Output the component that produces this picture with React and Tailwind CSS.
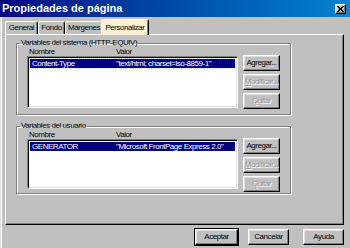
import React from 'react';

const raised = 'border border-t-white border-l-white border-r-black border-b-black shadow-[inset_-1px_-1px_#808080,inset_1px_1px_#dfdfdf]';
const sunken = 'border border-t-[#808080] border-l-[#808080] border-r-white border-b-white shadow-[inset_1px_1px_#000,inset_-1px_-1px_#dfdfdf]';
const small = 'text-[8px] tracking-[-0.45px] leading-none';

function Button({ children, disabled, className = '' }) {
  return (
    <div className={`${raised} h-[16px] flex items-center justify-center ${small} ${disabled ? 'text-[#9a9a9a] [text-shadow:1px_1px_0_#fff]' : 'text-black'} ${className}`}>
      {children}
    </div>
  );
}

function Tab({ label, active, w }) {
  if (active) {
    return (
      <div className={`${w} h-[16px] -mb-px -ml-[2px] relative z-10 bg-[#fbefd6] border border-b-0 border-t-white border-l-white border-r-black rounded-t-[2px] shadow-[inset_-1px_0_#808080] flex items-center justify-center ${small}`}>
        {label}
      </div>
    );
  }
  return (
    <div className={`${w} h-[13px] border border-b-0 border-t-white border-l-white border-r-black rounded-t-[2px] shadow-[inset_-1px_0_#808080] flex items-center justify-center ${small}`}>
      {label}
    </div>
  );
}

function Group({ title, row, value, focus, listH, className = '' }) {
  return (
    <fieldset className={`border border-[#808080] shadow-[1px_1px_0_#fff,inset_1px_1px_0_#fff] px-[10px] pb-[5px] ${className}`}>
      <legend className={`px-px ml-[-7px] ${small}`}>{title}</legend>
      <div className="flex gap-[5px]">
        <div className="w-[211px]">
          <div className={`flex ${small} pl-[2px] h-[9px] items-center`}>
            <span className="w-[87px]">Nombre</span>
            <span>Valor</span>
          </div>
          <div className={`${sunken} bg-white ${listH} p-[2px] overflow-hidden`}>
            <div className={`bg-[#000080] text-white ${small} h-[9px] flex items-center whitespace-nowrap ${focus ? 'outline outline-1 outline-dotted outline-[#e8e0a0]' : ''}`}>
              <span className="w-[86px] pl-[2px] shrink-0">{row}</span>
              <span>{value}</span>
            </div>
          </div>
        </div>
        <div className="w-[37px] flex flex-col gap-[3px] pt-[8px]">
          <Button>Agregar...</Button>
          <Button disabled><span><u>M</u>odificar...</span></Button>
          <Button disabled>Quitar</Button>
        </div>
      </div>
    </fieldset>
  );
}

export default function App() {
  return (
    <div className="w-[350px] h-[248px] bg-[#c0c0c0] overflow-hidden text-black font-['Liberation_Sans',Arial,sans-serif] shadow-[inset_1px_1px_#dfdfdf,inset_2px_2px_#fff]">
      <div className="h-[17px] bg-gradient-to-r from-[#000080] to-[#1084d0] flex items-center justify-between pl-[2px] pr-[4px]">
        <span className="text-white font-bold text-[11px] leading-none">Propiedades de página</span>
        <div className={`${raised} w-[11px] h-[10px] bg-[#c0c0c0] flex items-center justify-center`}>
          <svg width="7" height="6" viewBox="0 0 7 6"><path d="M0 0l6 6M6 0l-6 6M1 0l6 6M7 0l-6 6" stroke="#000" strokeWidth="1" /></svg>
        </div>
      </div>
      <div className="px-[5px] pt-[2px]">
        <div className="flex items-end h-[15px]">
          <Tab label="General" w="w-[33px]" />
          <Tab label="Fondo" w="w-[27px]" />
          <Tab label="Márgenes" w="w-[38px]" />
          <Tab label="Personalizar" w="w-[48px]" active />
        </div>
        <div className="h-[191px] w-[339px] border border-t-white border-l-white border-r-black border-b-black shadow-[inset_-1px_-1px_#808080] pt-[4px] pl-[10px]">
          <Group title="Variables del sistema (HTTP-EQUIV)" row="Content-Type" value={'"text/html; charset=iso-8859-1"'} focus listH="h-[52px]" className="w-[273px] h-[76px]" />
          <Group title="Variables del usuario" row="GENERATOR" value={'"Microsoft FrontPage Express 2.0"'} listH="h-[50px]" className="w-[273px] h-[72px] mt-[7px]" />
        </div>
        <div className="flex justify-end gap-[10px] pr-[1px] mt-[4px]">
          <Button className="w-[43px] outline outline-1 outline-black">Aceptar</Button>
          <Button className="w-[41px]">Cancelar</Button>
          <Button className="w-[41px] ml-[4px]">Ayuda</Button>
        </div>
      </div>
    </div>
  );
}
